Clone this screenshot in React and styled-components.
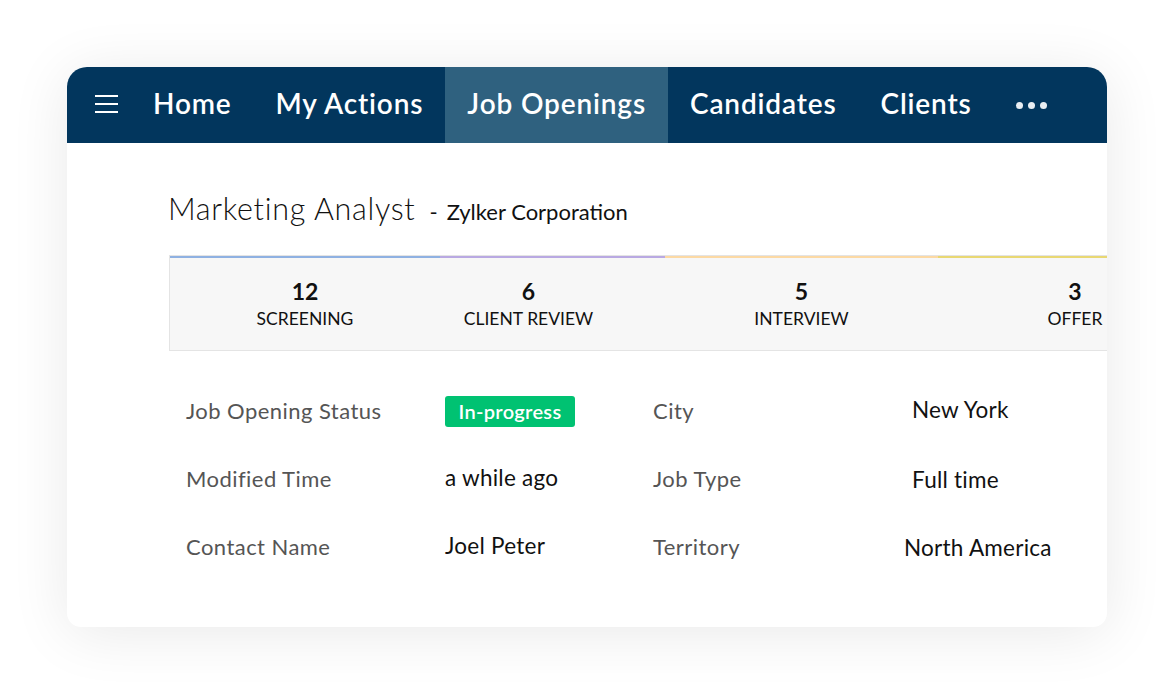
import React from "react";
import styled, { createGlobalStyle } from "styled-components";

const Global = createGlobalStyle`
  html, body { margin: 0; padding: 0; background: #ffffff; }
  body { font-family: "Lato", "Open Sans", sans-serif; }
  * { box-sizing: border-box; }
`;

const Page = styled.div`
  width: 1174px;
  height: 694px;
  padding: 67px 67px 0 67px;
  background: #ffffff;
`;

const Card = styled.div`
  width: 1040px;
  height: 560px;
  background: #ffffff;
  border-radius: 20px 20px 14px 14px;
  box-shadow: 0 6px 60px rgba(0, 0, 0, 0.09);
  overflow: hidden;
  display: flex;
  flex-direction: column;
`;

const Nav = styled.nav`
  height: 76px;
  background: #02365d;
  display: flex;
  align-items: stretch;
  padding-left: 28px;
`;

const Burger = styled.div`
  width: 23px;
  display: flex;
  flex-direction: column;
  justify-content: center;
  gap: 6px;
  margin-right: 13px;
  padding-bottom: 2px;
  span {
    display: block;
    height: 2px;
    background: #ffffff;
  }
`;

const NavItem = styled.div`
  display: flex;
  align-items: center;
  padding: 0 22px 4px;
  font-size: 28px;
  font-weight: 600;
  letter-spacing: 0.85px;
  color: #ffffff;
  background: ${(p) => (p.$active ? "#2f617f" : "transparent")};
  -webkit-font-smoothing: antialiased;
`;

const Dots = styled.div`
  display: flex;
  align-items: center;
  gap: 5px;
  padding: 0 0 0 22px;
  span {
    width: 7px;
    height: 7px;
    border-radius: 50%;
    background: #e8eef3;
  }
`;

const Body = styled.div`
  flex: 1;
  padding: 47px 0 0 101px;
  display: flex;
  flex-direction: column;
`;

const TitleRow = styled.div`
  display: flex;
  align-items: baseline;
  height: 40px;
`;

const Title = styled.h1`
  margin: 0;
  font-size: 30.5px;
  font-weight: 300;
  color: #111111;
  letter-spacing: 0.7px;
`;

const Dash = styled.span`
  font-size: 22px;
  color: #111111;
  margin: 0 9px 0 14px;
`;

const Sub = styled.span`
  font-size: 22px;
  color: #111111;
`;

const Stats = styled.div`
  margin-top: 25px;
  margin-left: 1px;
  height: 96px;
  background: #f7f7f7;
  border: 1px solid #e4e4e4;
  border-right: none;
  display: flex;
  width: 1100px;
`;

const Stat = styled.div`
  width: ${(p) => p.$w}px;
  border-top: 2px solid ${(p) => p.$color};
  display: flex;
  flex-direction: column;
  align-items: center;
  padding-top: 19px;
  padding-right: ${(p) => p.$pr || 0}px;
  color: #111111;
`;

const StatNum = styled.div`
  font-size: 23px;
  font-weight: 700;
  line-height: 28px;
`;

const StatLabel = styled.div`
  font-size: 17.5px;
  line-height: 20px;
  margin-top: 4px;
`;

const Fields = styled.div`
  margin-top: 45px;
  margin-left: 18px;
  display: grid;
  grid-template-columns: 259px 208px 259px 200px;
  grid-auto-rows: 68px;
`;

const Label = styled.div`
  font-size: 22px;
  color: #555555;
  line-height: 30px;
  letter-spacing: 0.45px;
`;

const Value = styled.div`
  font-size: 22.5px;
  color: #111111;
  line-height: 30px;
  letter-spacing: 0.25px;
  margin-left: ${(p) => p.$shift || 0}px;
  margin-top: ${(p) => p.$dy || 0}px;
`;

const Badge = styled.span`
  display: inline-flex;
  align-items: center;
  justify-content: center;
  width: 130px;
  height: 31px;
  margin-top: -2px;
  background: #00c272;
  color: #ffffff;
  border-radius: 3px;
  font-size: 20px;
  font-weight: 600;
  letter-spacing: 0.3px;
`;

const stats = [
  { n: 12, l: "SCREENING", w: 270, c: "#8fb1e2" },
  { n: 6, l: "CLIENT REVIEW", w: 225, c: "#b9a9e2", pr: 48 },
  { n: 5, l: "INTERVIEW", w: 273, c: "#fcd9a4" },
  { n: 3, l: "OFFER", w: 274, c: "#e9d873" },
];

export default function App() {
  return (
    <Page>
      <Global />
      <Card>
        <Nav>
          <Burger>
            <span />
            <span />
            <span />
          </Burger>
          <NavItem>Home</NavItem>
          <NavItem>My Actions</NavItem>
          <NavItem $active>Job Openings</NavItem>
          <NavItem>Candidates</NavItem>
          <NavItem>Clients</NavItem>
          <Dots>
            <span />
            <span />
            <span />
          </Dots>
        </Nav>
        <Body>
          <TitleRow>
            <Title>Marketing Analyst</Title>
            <Dash>-</Dash>
            <Sub>Zylker Corporation</Sub>
          </TitleRow>
          <Stats>
            {stats.map((s) => (
              <Stat key={s.l} $w={s.w} $color={s.c} $pr={s.pr}>
                <StatNum>{s.n}</StatNum>
                <StatLabel>{s.l}</StatLabel>
              </Stat>
            ))}
          </Stats>
          <Fields>
            <Label>Job Opening Status</Label>
            <Value>
              <Badge>In-progress</Badge>
            </Value>
            <Label>City</Label>
            <Value $dy={-1}>New York</Value>
            <Label>Modified Time</Label>
            <Value $dy={-1}>a while ago</Value>
            <Label>Job Type</Label>
            <Value $dy={1}>Full time</Value>
            <Label>Contact Name</Label>
            <Value $dy={-1}>Joel Peter</Value>
            <Label>Territory</Label>
            <Value $shift={-8} $dy={1}>North America</Value>
          </Fields>
        </Body>
      </Card>
    </Page>
  );
}
